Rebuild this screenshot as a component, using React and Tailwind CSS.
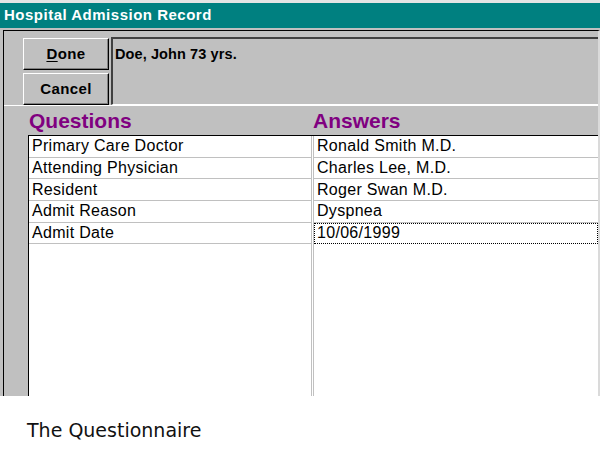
import * as React from "react";

const rows = [
  ["Primary Care Doctor", "Ronald Smith M.D."],
  ["Attending Physician", "Charles Lee, M.D."],
  ["Resident", "Roger Swan M.D."],
  ["Admit Reason", "Dyspnea"],
  ["Admit Date", "10/06/1999"],
];

function WinButton({ children }) {
  return (
    <button className="h-[32px] w-[86px] bg-[#c0c0c0] border border-t-white border-l-white border-r-black border-b-black shadow-[inset_-1px_-1px_0_#808080] text-[15px] font-bold tracking-[0.4px] text-black flex items-center justify-center">
      {children}
    </button>
  );
}

export default function App() {
  return (
    <div className="w-[600px] h-[452px] bg-white overflow-hidden font-['Liberation_Sans',Arial,sans-serif]">
      {/* Window */}
      <div className="h-[396px] bg-[#c0c0c0] flex flex-col overflow-hidden border-t-[3px] border-[#e4e4e4]">
        <div className="h-[25px] shrink-0 bg-[#008080] text-white font-bold text-[15px] tracking-[0.5px] pl-[4px] flex items-center">
          Hospital Admission Record
        </div>
        <div className="h-[2px] shrink-0" />

        <div className="flex-1 min-h-0 ml-[3px] border-t border-l border-black border-r-2 border-r-[#dadada] flex flex-col">
          {/* Buttons + patient box */}
          <div className="flex shrink-0 h-[74px] pt-[6px] pl-[19px]">
            <div className="flex flex-col gap-[3px] pt-px">
              <WinButton>
                <span>
                  <span className="underline underline-offset-2">D</span>one
                </span>
              </WinButton>
              <WinButton>Cancel</WinButton>
            </div>
            <div className="flex-1 ml-[2px] border-t-2 border-l-2 border-t-[#404040] border-l-[#404040] border-b border-b-white pl-[2px] pt-[3px]">
              <span className="text-[14.5px] font-bold tracking-[0.1px] text-black">
                Doe, John 73 yrs.
              </span>
            </div>
          </div>

          {/* Headers */}
          <div className="flex shrink-0 h-[30px] border-t border-white items-center text-[#800080] text-[21px] font-bold">
            <div className="w-[309px] pl-[25px]">Questions</div>
            <div>Answers</div>
          </div>

          {/* Grid */}
          <div className="flex-1 min-h-0 ml-[24px] bg-white border-t border-l border-black flex">
            <div className="w-[283px] shrink-0 border-r border-[#c0c0c0]">
              {rows.map(([q], i) => (
                <div
                  key={i}
                  className="h-[21.67px] border-b border-[#c0c0c0] pl-[3px] flex items-center text-[16px] tracking-[0.3px] text-black leading-none"
                >
                  {q}
                </div>
              ))}
            </div>
            <div className="w-px shrink-0" />
            <div className="flex-1 border-l border-[#c0c0c0]">
              {rows.map(([, a], i) => (
                <div
                  key={i}
                  className={
                    i === rows.length - 1
                      ? "h-[21.67px] border border-dotted border-black pl-[2px] flex items-center text-[16px] tracking-[0.3px] text-black leading-none"
                      : "h-[21.67px] border-b border-[#c0c0c0] pl-[3px] flex items-center text-[16px] tracking-[0.3px] text-black leading-none"
                  }
                >
                  {a}
                </div>
              ))}
            </div>
          </div>
        </div>
      </div>

      {/* Caption */}
      <div className="pl-[27px] pt-[23px] text-[19px] leading-[22px] text-[#111] font-['DejaVu_Sans',Verdana,sans-serif]">
        The Questionnaire
      </div>
    </div>
  );
}
